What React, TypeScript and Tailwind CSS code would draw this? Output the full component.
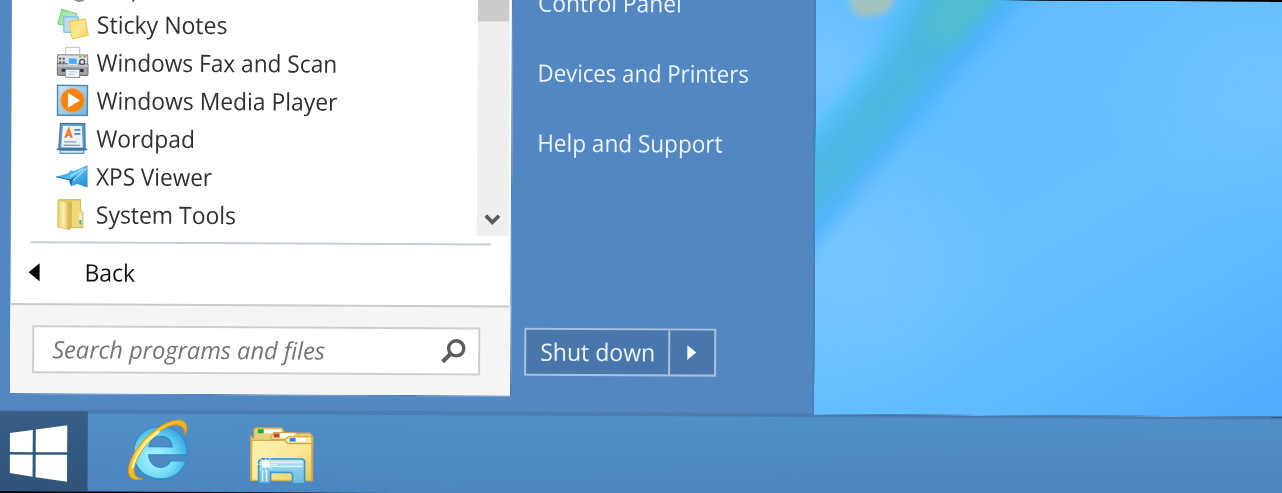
import type { ReactNode } from 'react';
import { clsx } from 'clsx';

const StickyNotesIcon = () => (
  <svg className="size-8" viewBox="0 0 32 32">
    <defs>
      <linearGradient id="note-green" x1="0" y1="0" x2="1" y2="1">
        <stop offset="0" stopColor="#8fe08f" />
        <stop offset="1" stopColor="#d2f2cf" />
      </linearGradient>
      <linearGradient id="note-yellow" x1="0" y1="0" x2="1" y2="1">
        <stop offset="0" stopColor="#ffd957" />
        <stop offset="0.5" stopColor="#fbe694" />
        <stop offset="1" stopColor="#f4cf4c" />
      </linearGradient>
    </defs>
    <path d="M5 .8L20 5.5L15.5 19L1 15.5Z" fill="url(#note-green)" stroke="#6fd46f" />
    <path d="M7 8.5H21.5V24H7Z" fill="#b7dcfa" stroke="#73b4ea" />
    <path d="M12 13.5L28.5 10.5L31.5 27L15.5 30.5Z" fill="url(#note-yellow)" stroke="#e9c84d" />
  </svg>
);

const FaxIcon = () => (
  <svg className="size-8" viewBox="0 0 32 32">
    <path d="M9 9V.8H23V9" fill="#fff" stroke="#b9bcc0" />
    <path d="M1 8.5H31V18H1Z" fill="#dfe2e5" stroke="#7c8188" />
    <path d="M.5 17.500H31.500V28L30 29H2L.5 28Z" fill="#9ea3a9" stroke="#5c6269" />
    <path d="M1 18H31V20.500H1Z" fill="#c3c7cb" />
    <path d="M11.500 11.500H20.500V18H11.500Z" fill="#4aa9fb" stroke="#dff0ff" />
    <path d="M2.500 11.500h2v2h-2zM6 11.500h2v2H6zM2.500 15h2v2h-2zM6 15h2v2H6z" fill="#4c535b" />
    <path d="M22 9.500h3V11h-3z" fill="#68da3d" />
    <path d="M27 9.500h2V11h-2z" fill="#e75a45" />
    <circle cx="25.5" cy="15.5" r="2.500" fill="#d7dbdf" stroke="#4c535b" strokeWidth="1.300" />
    <path d="M5 22.500H27V25.500H5Z" fill="#33383e" />
    <path d="M9 23H23V31H9Z" fill="#f5f8fb" stroke="#8b9198" />
    <path d="M11.500 25.500H20M11.500 28H18" stroke="#b3c3d6" />
  </svg>
);

const MediaPlayerIcon = () => (
  <svg className="size-8" viewBox="0 0 32 32">
    <defs>
      <linearGradient id="wmp-frame" x1="0" y1="0" x2="1" y2="1">
        <stop offset="0" stopColor="#cbe5f5" />
        <stop offset="1" stopColor="#75b2dc" />
      </linearGradient>
    </defs>
    <path d="M1 1H31V31H1Z" fill="url(#wmp-frame)" stroke="#4b86b7" strokeWidth="1.5" />
    <circle cx="16" cy="16" r="11.8" fill="#f8830f" stroke="#f3a14f" strokeWidth=".8" />
    <path d="M11.5 8.5L23.5 16L11.5 23.5Z" fill="#fff" />
  </svg>
);

const WordpadIcon = () => (
  <svg className="size-8" viewBox="0 0 32 32">
    <path d="M4 1H28.5L29 26H2.500Z" fill="#5f97c0" stroke="#3d739e" />
    <path d="M6.500 3.500H25.500L26.500 25H5Z" fill="#e9f3fb" />
    <path d="M9 15.500L12.500 7L15.500 15.500M10.500 12.500H14" fill="none" stroke="#f27a21" strokeWidth="2.200" />
    <path d="M18 7.500H24M18 11.500H24" stroke="#5780ca" strokeWidth="1.6" />
    <path d="M8 19.500H20M7.500 23H24" stroke="#8f9bab" strokeWidth="1.4" />
    <path d="M.5 27H31" stroke="#376d9b" strokeWidth="1.4" />
    <path d="M4 28H27.500V31H4Z" fill="#d5e7f4" stroke="#5f92b9" strokeWidth="1.200" />
  </svg>
);

const XpsIcon = () => (
  <svg className="size-8" viewBox="0 0 32 32">
    <defs>
      <linearGradient id="xps" x1="0" y1="0" x2="1" y2="1">
        <stop offset="0" stopColor="#3c8fd0" />
        <stop offset="0.5" stopColor="#55bdf4" />
        <stop offset="1" stopColor="#1c82c8" />
      </linearGradient>
    </defs>
    <path d="M0 16.500L12 13L14.500 10L18 10.500L31.500 4.500V27L21.500 23.500L15 26L13 19.500Z" fill="url(#xps)" />
    <path d="M13 19.500L21 15L16.500 20.500L15 26Z" fill="#226fa9" />
    <path d="M14 16L27 8.500M17 20L30 8" stroke="#a4dcfb" strokeWidth="1.300" />
    <path d="M0 16.500L13 19.500" stroke="#24668f" />
  </svg>
);

const FolderIcon = () => (
  <svg className="size-8" viewBox="0 0 32 32">
    <defs>
      <linearGradient id="folder-side" x1="0" y1="0" x2="1" y2="0">
        <stop offset="0" stopColor="#e8cd62" />
        <stop offset="0.45" stopColor="#fff2b8" />
        <stop offset="1" stopColor="#d1ae3d" />
      </linearGradient>
    </defs>
    <path d="M3 1.500L24.500 1V12L27 14V29H12L3 28Z" fill="#e9cc61" stroke="#d7b74d" />
    <path d="M16 2.500H24V12L26.500 14V28.500H16Z" fill="#f0d87b" />
    <path d="M2 1.500L14 4.500V31.500L2 28.500Z" fill="url(#folder-side)" stroke="#d9bc5b" strokeWidth=".8" />
    <path d="M14 4.500L16 3V29L14 31.500Z" fill="#d8ba53" />
    <path d="M23.500 15H25.500V26H23.500Z" fill="#e9f3f3" />
    <path d="M23.500 21.500H25.500V26H23.500Z" fill="#43a9c9" />
  </svg>
);

const RecorderIcon = () => (
  <svg className="size-8" viewBox="0 0 32 32">
    <ellipse cx="22.500" cy="27.500" rx="6" ry="4" fill="#8f8f8f" />
    <ellipse cx="21" cy="25.500" rx="5" ry="3.500" fill="#d4d4d4" />
  </svg>
);

const WindowsLogo = () => (
  <svg className="h-[58px] w-[58px]" viewBox="0 0 58 58" fill="#fff">
    <path d="M0 8L23 4.8V27H0Z" />
    <path d="M26 4.4L57.5 0V27H26Z" />
    <path d="M0 29.5H23V51.5L0 48Z" />
    <path d="M26 29.5H57.5V56.5L26 52Z" />
  </svg>
);

const ExplorerIcon = () => (
  <svg className="h-[62px] w-[62px]" viewBox="0 0 62 62">
    <defs>
      <radialGradient id="ie-body" cx="0.4" cy="0.6" r="0.65">
        <stop offset="0" stopColor="#b6f7ff" />
        <stop offset="0.55" stopColor="#74dcfa" />
        <stop offset="1" stopColor="#34a5df" />
      </radialGradient>
      <linearGradient id="ie-ring" x1="0" y1="1" x2="1" y2="0">
        <stop offset="0" stopColor="#f2b41a" />
        <stop offset="0.5" stopColor="#ffe34d" />
        <stop offset="1" stopColor="#e8ac1c" />
      </linearGradient>
    </defs>
    <path
      d="M59.5 42H58.500C55 53.500 45.500 60 33 60C17 60 6 49.500 6 34C6 18.500 17 7.500 33 7.500C50 7.500 60 19 59.500 36H21C21.500 43.500 26.500 48.500 33 48.500C37.500 48.500 41 46 43 42ZM21 28H44.500C44 21.500 39.500 17.500 33 17.500C26.500 17.500 22 21.500 21 28Z"
      fill="url(#ie-body)"
      stroke="#2c8cc6"
      strokeWidth="1.2"
    />
    <path
      d="M15.500 60C7 63 0 60 1 50C2 38 14 21 28 11C41 1 54-2 58 5C59.500 8 59 12 57.500 15C57 9 53 5 46 6C37 7 25 17 17 28C9 39 4 51 7.500 56C9 59 12 60 15.500 60Z"
      fill="url(#ie-ring)"
      stroke="#d29917"
      strokeWidth="1"
    />
    <path d="M5 49C8 36 18 22 31 13" fill="none" stroke="#fff5ac" strokeWidth="2" strokeLinecap="round" />
  </svg>
);

const LibrariesIcon = () => (
  <svg className="h-[60px] w-[66px]" viewBox="0 0 66 60">
    <defs>
      <linearGradient id="lib-front" x1="0" y1="0" x2="1" y2="1">
        <stop offset="0" stopColor="#fcf2a9" />
        <stop offset="0.55" stopColor="#fbe89b" />
        <stop offset="1" stopColor="#e6c653" />
      </linearGradient>
      <linearGradient id="lib-stand" x1="0" y1="0" x2="0" y2="1">
        <stop offset="0" stopColor="#b9e8f6" />
        <stop offset="0.5" stopColor="#80c9e9" />
        <stop offset="1" stopColor="#76b9e4" />
      </linearGradient>
    </defs>
    <path d="M4 12V3L6 1.500H32L34 4V6.500H60L63 10V54H1V10Z" fill="#e9cf7c" stroke="#c9a54c" strokeWidth="1.300" />
    <path d="M8 3H14V7H8Z" fill="#11b52c" />
    <path d="M14 3H31V7H14Z" fill="#fff" />
    <path d="M21 11L24 6H46L49 9V13H21Z" fill="#f1dc96" stroke="#c7a24c" />
    <path d="M24 7H30V11H24Z" fill="#d1422c" />
    <path d="M30 7H44V11H30Z" fill="#fff" />
    <path d="M2 14H34L39 10H62V54H2Z" fill="url(#lib-front)" stroke="#d0ae51" strokeWidth="1.200" />
    <path d="M38 17H62M38 17L35 14" fill="none" stroke="#c9a650" strokeWidth="1.500" />
    <path d="M40 11.500H46V15H40Z" fill="#168bdc" />
    <path d="M46 11.500H56V15H46Z" fill="#fff" />
    <path
      d="M10 34L12 32.500H53L55 34V57H43V48L41 46H21V57H9V35Z"
      fill="url(#lib-stand)"
      stroke="#3897c7"
      strokeWidth="1.600"
    />
    <path d="M12 36H53M13 40H53" stroke="#d6f4fb" strokeWidth="1.500" />
    <path d="M13 44V55M17 44V55" stroke="#e0f5fd" strokeWidth="1.500" />
    <path d="M16 22V46M6 38H28M10 32L22 43M10 44L26 26" stroke="#fff" strokeWidth="1" opacity=".6" />
    <circle cx="16" cy="37.500" r="4" fill="#fff" opacity=".8" />
  </svg>
);

const SearchIcon = () => (
  <svg className="h-[26px] w-[26px]" viewBox="0 0 26 26" fill="none" stroke="#5c5c5c">
    <circle cx="16" cy="10" r="7.600" strokeWidth="3.400" />
    <path d="M10.500 15.500L2.500 23.500" strokeWidth="4" />
  </svg>
);

interface Program {
  name: string;
  icon: ReactNode;
  width: string;
}

const programs: Program[] = [
  { name: 'Steps Recorder', icon: <RecorderIcon />, width: 'scale-x-[0.95]' },
  { name: 'Sticky Notes', icon: <StickyNotesIcon />, width: 'scale-x-[0.96]' },
  { name: 'Windows Fax and Scan', icon: <FaxIcon />, width: 'scale-x-[0.945]' },
  { name: 'Windows Media Player', icon: <MediaPlayerIcon />, width: 'scale-x-[0.953]' },
  { name: 'Wordpad', icon: <WordpadIcon />, width: 'scale-x-[0.95]' },
  { name: 'XPS Viewer', icon: <XpsIcon />, width: 'scale-x-[0.94]' },
  { name: 'System Tools', icon: <FolderIcon />, width: 'scale-x-[0.955]' },
];

const places = [
  { name: 'Control Panel', width: 'scale-x-[0.95]' },
  { name: 'Devices and Printers', width: 'scale-x-[0.923]' },
  { name: 'Help and Support', width: 'scale-x-[0.94]' },
];

function Label({ className, children }: { className?: string; children: ReactNode }) {
  return <span className={clsx('inline-block origin-left whitespace-nowrap', className)}>{children}</span>;
}

function ProgramList() {
  return (
    <div className="flex h-[239px] overflow-hidden">
      <ul className="-mt-[28px] flex-1 pl-[45px]">
        {programs.map((program) => (
          <li key={program.name} className="flex h-[38px] items-center gap-[8px] text-[#303030]">
            {program.icon}
            <Label className={program.width}>{program.name}</Label>
          </li>
        ))}
      </ul>
      <div className="mr-[2px] flex w-[32px] flex-col justify-between bg-[#efefef]">
        <div className="h-[24px] w-[31px] bg-[#cbcbcb]" />
        <svg className="mb-[9px] ml-[7px] h-[16px] w-[17px]" viewBox="0 0 18 16" fill="none">
          <path d="M2 4L9 11L16 4" stroke="#5a5a5a" strokeWidth="4" />
        </svg>
      </div>
    </div>
  );
}

function ProgramsPanel() {
  return (
    <div className="flex h-[399px] w-[501px] shrink-0 flex-col border-r border-b border-[#4d7db5] bg-white">
      <ProgramList />
      <div className="mt-[7px] mr-[20px] ml-[20px] h-[2px] bg-[#c5cdd5]" />
      <button className="flex h-[60px] items-center pb-[2px] pl-[18px] text-[#111]">
        <svg className="h-[20px] w-[12px]" viewBox="0 0 12 20">
          <path d="M11 1V19L0 10Z" fill="#000" />
        </svg>
        <Label className="ml-[44px] scale-x-[0.955] font-medium">Back</Label>
      </button>
      <div className="flex-1 border-t-2 border-[#cccccc] bg-[#f5f5f5] pt-[20px] pl-[22px]">
        <div className="flex h-[48px] w-[448px] items-center justify-between border-2 border-[#cecece] bg-white pr-[12px] pl-[18px] text-[#747474]">
          <Label className="scale-x-[0.984] italic">Search programs and files</Label>
          <SearchIcon />
        </div>
      </div>
    </div>
  );
}

function StartMenu() {
  return (
    <div className="flex w-[816px] shrink-0 border-r-2 border-b-2 border-[#4d7eb6] bg-[#5387c1] pl-[12px]">
      <ProgramsPanel />
      <div className="flex flex-1 flex-col pl-[13px] text-[#eef4fb]">
        <ul className="-mt-[30px] pl-[12px]">
          {places.map((place) => (
            <li key={place.name} className="flex h-[70px] items-center">
              <Label className={place.width}>{place.name}</Label>
            </li>
          ))}
        </ul>
        <div className="mt-[150px] flex h-[48px] w-[192px] border-2 border-[#a9c1df] bg-[#4a77ab]">
          <button className="flex w-[144px] items-center border-r-2 border-[#a9c1df] pb-px pl-[14px]">
            <Label className="scale-x-[0.96]">Shut down</Label>
          </button>
          <button className="flex flex-1 items-center pl-[17px]">
            <svg className="h-[16px] w-[10px]" viewBox="0 0 10 16">
              <path d="M0 0.500V15.500L9 8Z" fill="#fff" />
            </svg>
          </button>
        </div>
      </div>
    </div>
  );
}

function Wallpaper() {
  return (
    <div className="flex-1 overflow-hidden border-b border-[#6da9e0]">
      <svg className="h-[416px] w-[476px]" viewBox="0 0 476 416" preserveAspectRatio="none">
        <defs>
          <linearGradient id="sky" gradientUnits="userSpaceOnUse" x1="170" y1="0" x2="430" y2="450">
            <stop offset="0" stopColor="#62bcff" />
            <stop offset="0.45" stopColor="#66c0ff" />
            <stop offset="0.7" stopColor="#5fbaff" />
            <stop offset="1" stopColor="#50a9ff" />
          </linearGradient>
          <radialGradient id="glow">
            <stop offset="0" stopColor="#77c5ff" />
            <stop offset="1" stopColor="#77c5ff" stopOpacity="0" />
          </radialGradient>
          <filter id="soft" x="-30%" y="-30%" width="160%" height="160%">
            <feGaussianBlur stdDeviation="9" />
          </filter>
          <filter id="soft-small" x="-30%" y="-30%" width="160%" height="160%">
            <feGaussianBlur stdDeviation="3" />
          </filter>
        </defs>
        <rect width="476" height="416" fill="url(#sky)" />
        <ellipse cx="30" cy="260" rx="170" ry="150" fill="url(#glow)" />
        <ellipse cx="10" cy="70" rx="80" ry="90" fill="url(#glow)" />
        <ellipse cx="460" cy="90" rx="180" ry="130" fill="url(#glow)" opacity=".6" />
        <path d="M230-20C165 45 95 130-20 270V225C60 150 100 60 160-20Z" fill="#4fb4ff" filter="url(#soft)" />
        <path d="M100-20C75 50 35 90-20 155V190C50 120 90 60 130-20Z" fill="#4bc2f7" filter="url(#soft)" />
        <path d="M112-20C85 50 40 110-20 175V238C55 165 115 80 195-20Z" fill="#4db7e2" filter="url(#soft)" />
        <path d="M135-25L105 35L135 45L195-15Z" fill="#55c0cc" filter="url(#soft)" opacity=".85" />
        <path d="M31-5L38 14L48 18L70 14L82-5Z" fill="#a3c4c0" filter="url(#soft-small)" />
      </svg>
    </div>
  );
}

function Taskbar() {
  return (
    <div className="flex h-[80px] bg-linear-to-b from-[#528fc8] to-[#4c84be]">
      <button className="flex w-[90px] items-center bg-linear-to-b from-[#375e86] to-[#305379] pt-[5px] pl-[12px]">
        <WindowsLogo />
      </button>
      <div className="flex flex-1 border-t-2 border-[#4a7db3] bg-linear-to-r from-transparent via-[#4b8ec9]/30 via-30% to-transparent pl-[40px]">
        <button className="mt-[5px] h-[62px]">
          <ExplorerIcon />
        </button>
        <button className="mt-[12px] ml-[60px] h-[60px]">
          <LibrariesIcon />
        </button>
      </div>
    </div>
  );
}

export default function App() {
  return (
    <div className="h-[493px] w-full overflow-hidden bg-black font-['Open_Sans','Noto_Sans',sans-serif] text-[24px] leading-none">
      <div className="-mt-[5px] flex h-[496px] w-[1292px] origin-top-left rotate-[0.29deg] flex-col">
        <div className="flex h-[416px]">
          <StartMenu />
          <Wallpaper />
        </div>
        <Taskbar />
      </div>
    </div>
  );
}
